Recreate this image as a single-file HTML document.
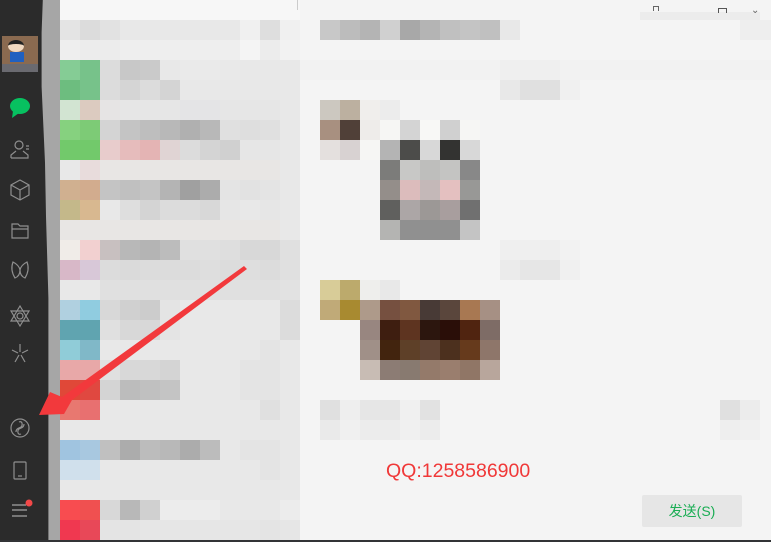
<!DOCTYPE html>
<html><head><meta charset="utf-8"><style>
*{margin:0;padding:0;box-sizing:border-box}
body{width:771px;height:542px;overflow:hidden;background:#f4f4f4;position:relative;font-family:"Liberation Sans","Noto Sans CJK SC",sans-serif}
#side{position:absolute;left:0;top:0;width:60px;height:542px;background:#2b2b2b}
#strip{position:absolute;left:40px;top:0;width:20px;height:542px;background:#a6a6a6;clip-path:polygon(14% 0,100% 0,100% 100%,42% 100%,42% 55%,30% 40%,25% 30%,8% 16%,8% 6%)}
.row{position:absolute;left:60px;height:20px;display:flex}
.row span{width:20px;height:20px;display:block}
.r{position:absolute;height:20px;display:flex}
.r span{width:20px;height:20px;display:block}
svg{position:absolute}
</style></head><body>
<div id="side"></div>
<div id="strip"></div>
<div style="position:absolute;left:2px;top:36px;width:36px;height:36px;background:#8a6a50">
<div style="position:absolute;left:0;top:28px;width:36px;height:8px;background:#6a6a70"></div>
<div style="position:absolute;left:6px;top:4px;width:16px;height:12px;border-radius:50%;background:#f0d8c0;border-top:4px solid #222"></div>
<div style="position:absolute;left:8px;top:16px;width:14px;height:10px;background:#2060c0"></div>
</div>
<div style="position:absolute;left:60px;top:0;width:240px;height:20px;background:#f7f7f7"></div>
<div style="position:absolute;left:297px;top:0;width:1px;height:10px;background:#ccc"></div>

<div class="row" style="top:20px"><span style="background:#e4e4e4"></span><span style="background:#dcdcdc"></span><span style="background:#e2e2e2"></span><span style="background:#e8e8e8"></span><span style="background:#e8e8e8"></span><span style="background:#e8e8e8"></span><span style="background:#e8e8e8"></span><span style="background:#e8e8e8"></span><span style="background:#e8e8e8"></span><span style="background:#f0f0f0"></span><span style="background:#dedede"></span><span style="background:#f0f0f0"></span></div>
<div class="row" style="top:40px"><span style="background:#eeeeee"></span><span style="background:#ececec"></span><span style="background:#ececec"></span><span style="background:#eeeeee"></span><span style="background:#eeeeee"></span><span style="background:#eeeeee"></span><span style="background:#eeeeee"></span><span style="background:#eeeeee"></span><span style="background:#eeeeee"></span><span style="background:#f4f4f4"></span><span style="background:#ececec"></span><span style="background:#f2f2f2"></span></div>
<div class="row" style="top:60px"><span style="background:#85cc95"></span><span style="background:#77c28a"></span><span style="background:#dcdcdc"></span><span style="background:#c8c8c8"></span><span style="background:#cacaca"></span><span style="background:#e8e8e8"></span><span style="background:#eaeaea"></span><span style="background:#eaeaea"></span><span style="background:#e9e9e9"></span><span style="background:#e8e8e8"></span><span style="background:#e8e8e8"></span><span style="background:#e8e8e8"></span></div>
<div class="row" style="top:80px"><span style="background:#6dbd7f"></span><span style="background:#77c28a"></span><span style="background:#dcdcdc"></span><span style="background:#d5d5d5"></span><span style="background:#dcdcdc"></span><span style="background:#d4d4d4"></span><span style="background:#e8e8e8"></span><span style="background:#e8e8e8"></span><span style="background:#e8e8e8"></span><span style="background:#e8e8e8"></span><span style="background:#e8e8e8"></span><span style="background:#e8e8e8"></span></div>
<div class="row" style="top:100px"><span style="background:#d2e4d2"></span><span style="background:#dccbc0"></span><span style="background:#e6e4e4"></span><span style="background:#e6e6e6"></span><span style="background:#e6e6e6"></span><span style="background:#e6e6e6"></span><span style="background:#e4e4e6"></span><span style="background:#e4e4e6"></span><span style="background:#e6e6e6"></span><span style="background:#e6e6e6"></span><span style="background:#e6e6e6"></span><span style="background:#e8e8e8"></span></div>
<div class="row" style="top:120px"><span style="background:#86d17f"></span><span style="background:#7dcb76"></span><span style="background:#d4d4d4"></span><span style="background:#c4c4c4"></span><span style="background:#bebebe"></span><span style="background:#b8b8b8"></span><span style="background:#b0b0b0"></span><span style="background:#b8b8b8"></span><span style="background:#e0e0e0"></span><span style="background:#dedede"></span><span style="background:#e0e0e0"></span><span style="background:#e8e8e8"></span></div>
<div class="row" style="top:140px"><span style="background:#72c96b"></span><span style="background:#72c96b"></span><span style="background:#e8cccc"></span><span style="background:#e6bcbc"></span><span style="background:#e4b4b4"></span><span style="background:#e0d4d4"></span><span style="background:#dcdcdc"></span><span style="background:#d4d4d4"></span><span style="background:#d0d0d0"></span><span style="background:#e6e6e6"></span><span style="background:#e6e6e6"></span><span style="background:#e8e8e8"></span></div>
<div class="row" style="top:160px"><span style="background:#e8e8e8"></span><span style="background:#e8dcdc"></span><span style="background:#e8e6e4"></span><span style="background:#e8e6e4"></span><span style="background:#e8e6e4"></span><span style="background:#e8e6e4"></span><span style="background:#e8e6e4"></span><span style="background:#e8e6e4"></span><span style="background:#e8e6e4"></span><span style="background:#e8e6e4"></span><span style="background:#e8e6e4"></span><span style="background:#e8e8e8"></span></div>
<div class="row" style="top:180px"><span style="background:#d0b090"></span><span style="background:#d2ac8e"></span><span style="background:#c4c4c4"></span><span style="background:#c0c0c0"></span><span style="background:#c4c4c4"></span><span style="background:#b4b4b4"></span><span style="background:#a0a0a0"></span><span style="background:#acacac"></span><span style="background:#e4e4e4"></span><span style="background:#e2e2e2"></span><span style="background:#e4e4e4"></span><span style="background:#e8e8e8"></span></div>
<div class="row" style="top:200px"><span style="background:#c4b88a"></span><span style="background:#d8b890"></span><span style="background:#e8e8e8"></span><span style="background:#dedede"></span><span style="background:#d4d4d4"></span><span style="background:#dcdcdc"></span><span style="background:#dcdcdc"></span><span style="background:#d8d8d8"></span><span style="background:#e6e6e6"></span><span style="background:#e8e8e8"></span><span style="background:#e6e6e6"></span><span style="background:#e8e8e8"></span></div>
<div class="row" style="top:220px"><span style="background:#e8e6e4"></span><span style="background:#e8e6e4"></span><span style="background:#e8e6e4"></span><span style="background:#e8e6e4"></span><span style="background:#e8e6e4"></span><span style="background:#e8e6e4"></span><span style="background:#e8e6e4"></span><span style="background:#e8e6e4"></span><span style="background:#e8e6e4"></span><span style="background:#e8e6e4"></span><span style="background:#e8e6e4"></span><span style="background:#e8e8e8"></span></div>
<div class="row" style="top:240px"><span style="background:#f0ece8"></span><span style="background:#f2d0d0"></span><span style="background:#c8c0c0"></span><span style="background:#b8b8b8"></span><span style="background:#b4b4b4"></span><span style="background:#bcbcbc"></span><span style="background:#e0e0e0"></span><span style="background:#e0e0e0"></span><span style="background:#dedede"></span><span style="background:#d8d8d8"></span><span style="background:#d8d8d8"></span><span style="background:#e0e0e0"></span></div>
<div class="row" style="top:260px"><span style="background:#d8b8c8"></span><span style="background:#d8c8d8"></span><span style="background:#dcdcdc"></span><span style="background:#dadada"></span><span style="background:#dcdcdc"></span><span style="background:#dcdcdc"></span><span style="background:#dcdcdc"></span><span style="background:#dedede"></span><span style="background:#dcdcdc"></span><span style="background:#dedede"></span><span style="background:#dcdcdc"></span><span style="background:#e0e0e0"></span></div>
<div class="row" style="top:280px"><span style="background:#e8e8e8"></span><span style="background:#e8e8e8"></span><span style="background:#e0e0e0"></span><span style="background:#e0e0e0"></span><span style="background:#e0e0e0"></span><span style="background:#e0e0e0"></span><span style="background:#e0e0e0"></span><span style="background:#e0e0e0"></span><span style="background:#e0e0e0"></span><span style="background:#e0e0e0"></span><span style="background:#e0e0e0"></span><span style="background:#e2e2e2"></span></div>
<div class="row" style="top:300px"><span style="background:#b0d0e0"></span><span style="background:#90cce0"></span><span style="background:#d8d8d8"></span><span style="background:#d0d0d0"></span><span style="background:#cccccc"></span><span style="background:#e4e4e4"></span><span style="background:#e8e8e8"></span><span style="background:#e8e8e8"></span><span style="background:#e8e8e8"></span><span style="background:#e8e8e8"></span><span style="background:#e8e8e8"></span><span style="background:#dcdcdc"></span></div>
<div class="row" style="top:320px"><span style="background:#60a4b0"></span><span style="background:#60a4b0"></span><span style="background:#e0e0e0"></span><span style="background:#d8d8d8"></span><span style="background:#d8d8d8"></span><span style="background:#e4e4e4"></span><span style="background:#e8e8e8"></span><span style="background:#e8e8e8"></span><span style="background:#e8e8e8"></span><span style="background:#e8e8e8"></span><span style="background:#e8e8e8"></span><span style="background:#dcdcdc"></span></div>
<div class="row" style="top:340px"><span style="background:#90ccd8"></span><span style="background:#80b8c8"></span><span style="background:#e8e8e8"></span><span style="background:#e8e8e8"></span><span style="background:#e8e8e8"></span><span style="background:#e8e8e8"></span><span style="background:#e8e8e8"></span><span style="background:#e8e8e8"></span><span style="background:#e8e8e8"></span><span style="background:#e8e8e8"></span><span style="background:#e4e4e4"></span><span style="background:#e8e8e8"></span></div>
<div class="row" style="top:360px"><span style="background:#e8a8a8"></span><span style="background:#e8a8a8"></span><span style="background:#e0e0e0"></span><span style="background:#d8d8d8"></span><span style="background:#d8d8d8"></span><span style="background:#d4d4d4"></span><span style="background:#e8e8e8"></span><span style="background:#e8e8e8"></span><span style="background:#e8e8e8"></span><span style="background:#e4e4e4"></span><span style="background:#e4e4e4"></span><span style="background:#e8e8e8"></span></div>
<div class="row" style="top:380px"><span style="background:#e04838"></span><span style="background:#e04840"></span><span style="background:#d4d4d4"></span><span style="background:#bcbcbc"></span><span style="background:#c0c0c0"></span><span style="background:#c4c4c4"></span><span style="background:#e8e8e8"></span><span style="background:#e8e8e8"></span><span style="background:#e8e8e8"></span><span style="background:#e4e4e4"></span><span style="background:#e4e4e4"></span><span style="background:#e8e8e8"></span></div>
<div class="row" style="top:400px"><span style="background:#e87870"></span><span style="background:#e87070"></span><span style="background:#e8e8e8"></span><span style="background:#e8e8e8"></span><span style="background:#e8e8e8"></span><span style="background:#e8e8e8"></span><span style="background:#e8e8e8"></span><span style="background:#e8e8e8"></span><span style="background:#e8e8e8"></span><span style="background:#e8e8e8"></span><span style="background:#e0e0e0"></span><span style="background:#e8e8e8"></span></div>
<div class="row" style="top:420px"><span style="background:#e8e8e8"></span><span style="background:#e8e8e8"></span><span style="background:#e8e8e8"></span><span style="background:#e8e8e8"></span><span style="background:#e8e8e8"></span><span style="background:#e8e8e8"></span><span style="background:#e8e8e8"></span><span style="background:#e8e8e8"></span><span style="background:#e8e8e8"></span><span style="background:#e8e8e8"></span><span style="background:#e8e8e8"></span><span style="background:#e8e8e8"></span></div>
<div class="row" style="top:440px"><span style="background:#a0c4e0"></span><span style="background:#a8c8e0"></span><span style="background:#c0c0c0"></span><span style="background:#acacac"></span><span style="background:#bcbcbc"></span><span style="background:#b8b8b8"></span><span style="background:#acacac"></span><span style="background:#bcbcbc"></span><span style="background:#e8e8e8"></span><span style="background:#e4e4e4"></span><span style="background:#e4e4e4"></span><span style="background:#e8e8e8"></span></div>
<div class="row" style="top:460px"><span style="background:#d0e0ec"></span><span style="background:#d0e0ec"></span><span style="background:#e8e8e8"></span><span style="background:#e8e8e8"></span><span style="background:#e8e8e8"></span><span style="background:#e8e8e8"></span><span style="background:#e8e8e8"></span><span style="background:#e8e8e8"></span><span style="background:#e8e8e8"></span><span style="background:#e8e8e8"></span><span style="background:#e4e4e4"></span><span style="background:#e8e8e8"></span></div>
<div class="row" style="top:480px"><span style="background:#e8e8e8"></span><span style="background:#e8e8e8"></span><span style="background:#e8e8e8"></span><span style="background:#e8e8e8"></span><span style="background:#e8e8e8"></span><span style="background:#e8e8e8"></span><span style="background:#e8e8e8"></span><span style="background:#e8e8e8"></span><span style="background:#e8e8e8"></span><span style="background:#e8e8e8"></span><span style="background:#e8e8e8"></span><span style="background:#e8e8e8"></span></div>
<div class="row" style="top:500px"><span style="background:#f84c50"></span><span style="background:#f05050"></span><span style="background:#d8d8d8"></span><span style="background:#b8b8b8"></span><span style="background:#d0d0d0"></span><span style="background:#ececec"></span><span style="background:#ececec"></span><span style="background:#ececec"></span><span style="background:#e8e8e8"></span><span style="background:#e8e8e8"></span><span style="background:#e8e8e8"></span><span style="background:#ececec"></span></div>
<div class="row" style="top:520px"><span style="background:#f03850"></span><span style="background:#e84858"></span><span style="background:#e4e4e4"></span><span style="background:#e4e4e4"></span><span style="background:#e6e6e6"></span><span style="background:#e6e6e6"></span><span style="background:#e6e6e6"></span><span style="background:#e6e6e6"></span><span style="background:#e6e6e6"></span><span style="background:#e6e6e6"></span><span style="background:#e4e4e4"></span><span style="background:#e6e6e6"></span></div>

<div class="r" style="left:320px;top:20px"><span style="background:#c8c8c8"></span><span style="background:#bcbcbc"></span><span style="background:#b4b4b4"></span><span style="background:#d0d0d0"></span><span style="background:#a8a8a8"></span><span style="background:#b4b4b4"></span><span style="background:#c0c0c0"></span><span style="background:#c4c4c4"></span><span style="background:#c0c0c0"></span><span style="background:#e8e8e8"></span></div>
<div style="position:absolute;left:740px;top:20px;width:31px;height:20px;background:#eeeeee"></div>
<div style="position:absolute;left:640px;top:12px;width:120px;height:8px;background:#ececec"></div>
<div style="position:absolute;left:300px;top:60px;width:471px;height:20px;background:#f2f2f2"></div>
<div class="r" style="left:500px;top:60px"><span style="background:#efefef"></span><span style="background:#efefef"></span><span style="background:#efefef"></span><span style="background:#f2f2f2"></span></div>
<div class="r" style="left:500px;top:80px"><span style="background:#e8e8e8"></span><span style="background:#e0e0e0"></span><span style="background:#e0e0e0"></span><span style="background:#f0f0f0"></span></div>
<div class="r" style="left:320px;top:100px"><span style="background:#ccc8c0"></span><span style="background:#bcb0a0"></span><span style="background:#f0eeec"></span><span style="background:#ececec"></span></div>
<div class="r" style="left:320px;top:120px"><span style="background:#a89080"></span><span style="background:#504038"></span><span style="background:#eeecea"></span><span style="background:#f6f6f4"></span><span style="background:#d4d4d4"></span><span style="background:#f8f8f6"></span><span style="background:#d0d0d0"></span><span style="background:#f6f6f4"></span></div>
<div class="r" style="left:320px;top:140px"><span style="background:#e4e0de"></span><span style="background:#d8d2d2"></span><span style="background:#f6f6f4"></span><span style="background:#b4b4b4"></span><span style="background:#4c4c4a"></span><span style="background:#d8d8d8"></span><span style="background:#333331"></span><span style="background:#d8d8d8"></span></div>
<div class="r" style="left:380px;top:160px"><span style="background:#7c7c7a"></span><span style="background:#c8c8c6"></span><span style="background:#bebebc"></span><span style="background:#c4c4c2"></span><span style="background:#888888"></span></div>
<div class="r" style="left:380px;top:180px"><span style="background:#948e8a"></span><span style="background:#dcbcbc"></span><span style="background:#c4b8b8"></span><span style="background:#e4c0c0"></span><span style="background:#989896"></span></div>
<div class="r" style="left:380px;top:200px"><span style="background:#60605e"></span><span style="background:#aca6a6"></span><span style="background:#9c9896"></span><span style="background:#a89e9e"></span><span style="background:#707070"></span></div>
<div class="r" style="left:380px;top:220px"><span style="background:#b4b4b2"></span><span style="background:#909090"></span><span style="background:#909090"></span><span style="background:#909090"></span><span style="background:#c4c4c4"></span></div>
<div class="r" style="left:500px;top:240px"><span style="background:#efefef"></span><span style="background:#efefef"></span><span style="background:#eeeeee"></span><span style="background:#f2f2f2"></span></div>
<div class="r" style="left:500px;top:260px"><span style="background:#ebebeb"></span><span style="background:#e6e6e6"></span><span style="background:#e6e6e6"></span><span style="background:#f0f0f0"></span></div>
<div class="r" style="left:320px;top:280px"><span style="background:#d8cc98"></span><span style="background:#bcaa6c"></span><span style="background:#eeeeec"></span><span style="background:#e8e8e8"></span></div>
<div class="r" style="left:320px;top:300px"><span style="background:#c0aa78"></span><span style="background:#a88a30"></span><span style="background:#ae9a8a"></span><span style="background:#765040"></span><span style="background:#805840"></span><span style="background:#483a36"></span><span style="background:#5a463c"></span><span style="background:#a87852"></span><span style="background:#a69084"></span></div>
<div class="r" style="left:360px;top:320px"><span style="background:#988680"></span><span style="background:#3e1e10"></span><span style="background:#5e3420"></span><span style="background:#2c160e"></span><span style="background:#2a0e08"></span><span style="background:#502410"></span><span style="background:#7e6c66"></span></div>
<div class="r" style="left:360px;top:340px"><span style="background:#a09088"></span><span style="background:#42240e"></span><span style="background:#5e4028"></span><span style="background:#604434"></span><span style="background:#4c301e"></span><span style="background:#663a1c"></span><span style="background:#8e766a"></span></div>
<div class="r" style="left:360px;top:360px"><span style="background:#c8bcb4"></span><span style="background:#8c7c74"></span><span style="background:#887a70"></span><span style="background:#947a6a"></span><span style="background:#9a7e6e"></span><span style="background:#907666"></span><span style="background:#b8a69c"></span></div>
<div class="r" style="left:320px;top:400px"><span style="background:#e0e0e0"></span><span style="background:#eeeeee"></span><span style="background:#e6e6e6"></span><span style="background:#e6e6e6"></span><span style="background:#f0f0f0"></span><span style="background:#e2e2e2"></span></div>
<div class="r" style="left:320px;top:420px"><span style="background:#eaeaea"></span><span style="background:#f0f0f0"></span><span style="background:#ececec"></span><span style="background:#ececec"></span><span style="background:#f0f0f0"></span><span style="background:#ececec"></span></div>
<div class="r" style="left:720px;top:400px"><span style="background:#e0e0e0"></span><span style="background:#ececec"></span></div>
<div class="r" style="left:720px;top:420px"><span style="background:#eeeeee"></span><span style="background:#f0f0f0"></span></div>

<div style="position:absolute;left:653px;top:6px;width:6px;height:5px;border:1px solid #666;border-bottom:none"></div>
<div style="position:absolute;left:718px;top:8px;width:9px;height:5px;border:1px solid #555;border-bottom:none"></div>
<div style="position:absolute;left:751px;top:6px;font-size:10px;color:#666;line-height:1">⌄</div>

<div style="position:absolute;left:386px;top:458px;font-size:19.5px;color:#f03838;line-height:26px">QQ:1258586900</div>
<div style="position:absolute;left:642px;top:495px;width:100px;height:32px;background:#e6e6e6;border-radius:2px;color:#1aad54;font-size:14px;text-align:center;line-height:32px">发送(S)</div>
<div style="position:absolute;left:0;top:540px;width:771px;height:2px;background:#323436"></div>

<svg width="771" height="542" style="left:0;top:0"><polygon points="244,266 247,269 72,400 64,414 39,415 50,392 62,397" fill="#f2393c"/></svg>

<svg width="40" height="542" style="left:0;top:0" fill="none" stroke="#8f8f8f" stroke-width="1.2">
<ellipse cx="20" cy="106" rx="10" ry="8" fill="#07c160" stroke="none"/>
<path d="M13 111 L12 118 L19 113Z" fill="#07c160" stroke="none"/>
<circle cx="19" cy="145" r="4"/>
<path d="M11 158 v-3 l5-4 M23 151 l5 4 v3 H11 M26 146h3 M26 149h3"/>
<path d="M20 180 l9 5 v10 l-9 5 l-9-5 v-10z M11 185 l9 5 l9-5 M20 190v10"/>
<path d="M12 224 h6 l2 2 h8 v12 h-16z M12 229 h16"/>
<path d="M13 262 q-3 8 2 16 q5-2 5-8 q0 6 5 8 q5-8 2-16 q-6 3 -7 8 q-1-5 -7-8z"/>
<path d="M20 306 l9 15 h-18z M20 326 l9-15 h-18z"/>
<circle cx="20" cy="316" r="3"/>
<path d="M20 344v8 M12 350l6 3 M28 350l-6 3 M15 362l4-7 M25 362l-4-7"/>
<circle cx="20" cy="428" r="9"/>
<path d="M16 432 q0-3 3-4 q4-1 3-5 q-1-2 -3-1 M24 424 q0 3-3 4 q-4 1-3 5 q1 2 3 1"/>
<rect x="14" y="462" width="12" height="17" rx="1"/>
<path d="M18 476h4"/>
<path d="M12 505h14 M12 510h15 M12 516h15" stroke-width="1.4"/>
<circle cx="29" cy="503" r="3.5" fill="#f24848" stroke="none"/>
</svg>
</body></html>
